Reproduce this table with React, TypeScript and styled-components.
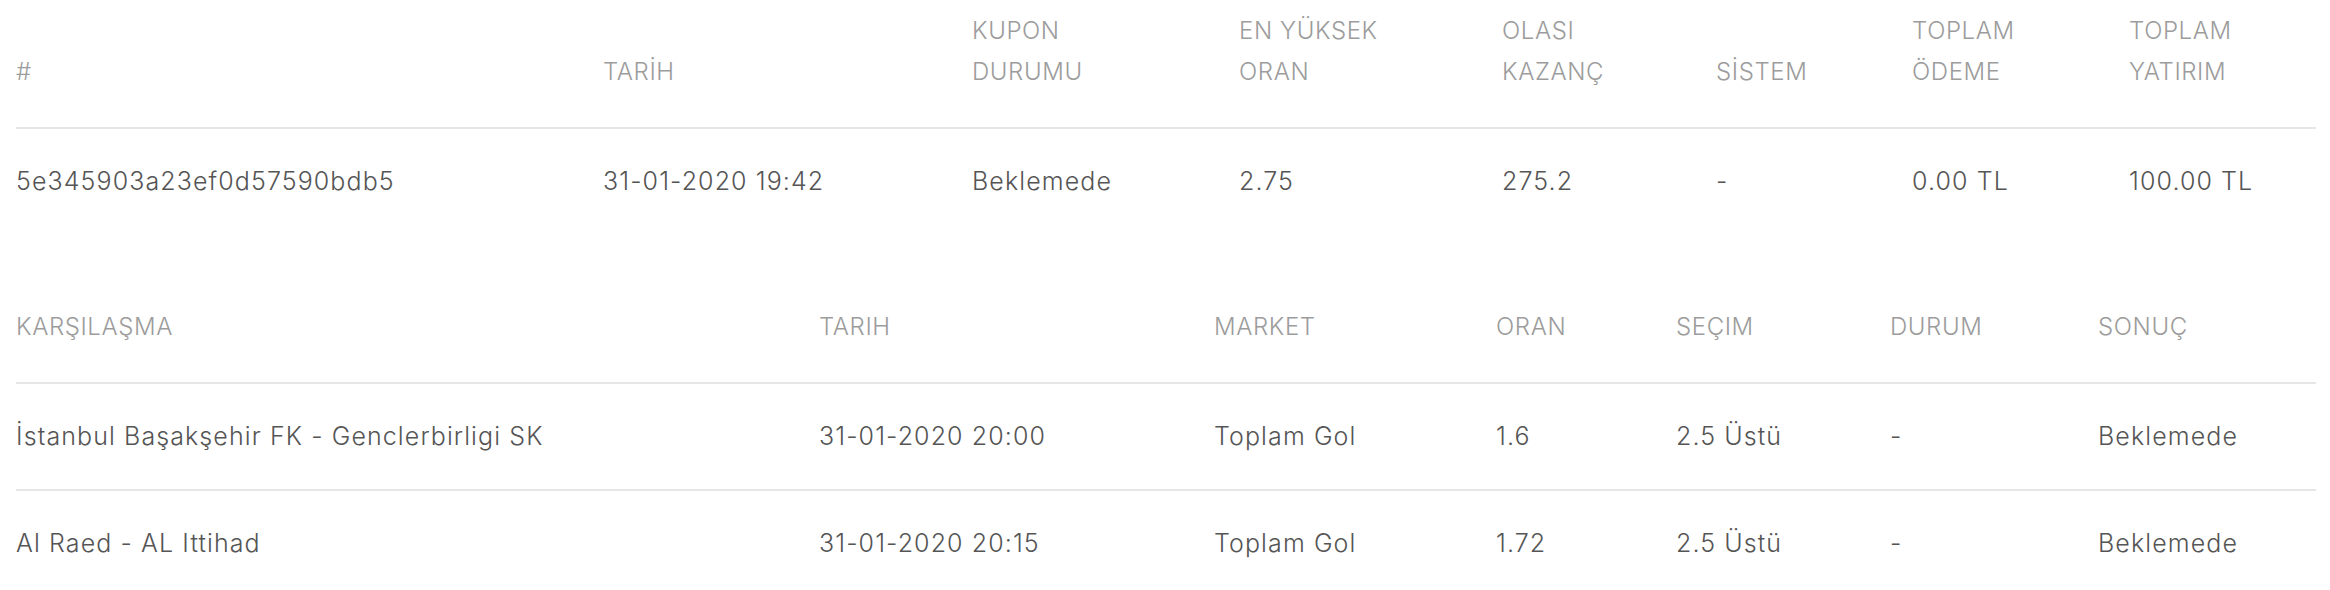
import React from "react";
import styled, { createGlobalStyle } from "styled-components";

const GlobalStyle = createGlobalStyle`
  html, body { margin: 0; padding: 0; background: #ffffff; }
  body { font-family: Inter, "Noto Sans", sans-serif; }
`;

const Page = styled.div`
  padding: 0 14px 0 16px;
  width: 2300px;
  display: flex;
  flex-direction: column;
  gap: 62px;
`;

const Table = styled.div`
  display: flex;
  flex-direction: column;
`;

const Row = styled.div<{ $cols: string; $head?: boolean }>`
  display: grid;
  grid-template-columns: ${(p) => p.$cols};
  align-items: end;
  border-top: ${(p) => (p.$head ? "none" : "2px solid #e6e6e6")};
  padding: ${(p) => (p.$head ? "10px 0 35px" : "32px 0")};
`;

const HeadCell = styled.div`
  font-family: Inter, "Noto Sans", sans-serif;
  font-weight: 300;
  font-size: 24px;
  line-height: 41px;
  letter-spacing: 0.6px;
  color: #9c9c9c;
  text-transform: uppercase;
  white-space: pre-line;
`;

const Cell = styled.div`
  font-family: Inter, "Noto Sans", sans-serif;
  font-weight: 300;
  font-size: 25px;
  line-height: 41px;
  letter-spacing: 1.1px;
  color: #555555;
  white-space: nowrap;
`;

const couponCols = "587px 369px 267px 263px 214px 196px 217px 187px";
const matchCols = "803px 395px 282px 180px 214px 208px 218px";

const couponHead = [
  "#",
  "TARİH",
  "KUPON\nDURUMU",
  "EN YÜKSEK\nORAN",
  "OLASI\nKAZANÇ",
  "SİSTEM",
  "TOPLAM\nÖDEME",
  "TOPLAM\nYATIRIM",
];

const couponRow = [
  "5e345903a23ef0d57590bdb5",
  "31-01-2020 19:42",
  "Beklemede",
  "2.75",
  "275.2",
  "-",
  "0.00 TL",
  "100.00 TL",
];

const matchHead = ["KARŞILAŞMA", "TARIH", "MARKET", "ORAN", "SEÇIM", "DURUM", "SONUÇ"];

const matchRows = [
  [
    "İstanbul Başakşehir FK - Genclerbirligi SK",
    "31-01-2020 20:00",
    "Toplam Gol",
    "1.6",
    "2.5 Üstü",
    "-",
    "Beklemede",
  ],
  ["Al Raed - AL Ittihad", "31-01-2020 20:15", "Toplam Gol", "1.72", "2.5 Üstü", "-", "Beklemede"],
];

export default function App() {
  return (
    <>
      <GlobalStyle />
      <Page>
        <Table>
          <Row $cols={couponCols} $head>
            {couponHead.map((h) => (
              <HeadCell key={h}>{h}</HeadCell>
            ))}
          </Row>
          <Row $cols={couponCols}>
            {couponRow.map((c, i) => (
              <Cell key={i}>{c}</Cell>
            ))}
          </Row>
        </Table>
        <Table>
          <Row $cols={matchCols} $head>
            {matchHead.map((h) => (
              <HeadCell key={h}>{h}</HeadCell>
            ))}
          </Row>
          {matchRows.map((r, ri) => (
            <Row $cols={matchCols} key={ri}>
              {r.map((c, i) => (
                <Cell key={i}>{c}</Cell>
              ))}
            </Row>
          ))}
        </Table>
      </Page>
    </>
  );
}
